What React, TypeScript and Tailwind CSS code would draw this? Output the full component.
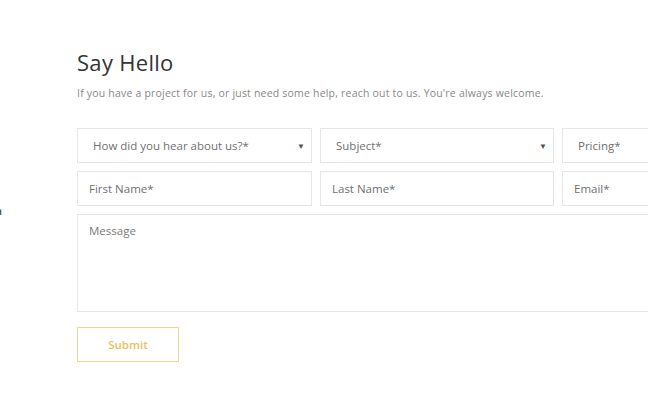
const fieldBase =
  "h-[35px] border border-[#e6e6e6] bg-white text-[11.5px] text-[#6f6f6f] flex items-center";

function SelectField({ label }: { label: string }) {
  return (
    <div className={`${fieldBase} pl-[15px] pr-[6px] justify-between`}>
      <span>{label}</span>
      <span className="text-[8px] text-[#555]">▼</span>
    </div>
  );
}

function InputField({ label }: { label: string }) {
  return <div className={`${fieldBase} px-[11px]`}>{label}</div>;
}

export default function App() {
  return (
    <div
      className="relative w-[648px] h-[410px] overflow-hidden bg-white"
      style={{ fontFamily: '"Open Sans", "Liberation Sans", sans-serif' }}
    >
      {/* cut-off text at the left edge */}
      <span className="absolute left-[-5px] top-[203px] text-[11px] font-semibold text-[#444]">n</span>

      <section className="w-[721px] ml-[77px] pt-[46px]">
        <h1 className="text-[22px] font-medium text-[#333] leading-[32px] tracking-[0.3px]">
          Say Hello
        </h1>
        <p className="mt-[7px] text-[10.5px] text-[#888] leading-[16px] tracking-[0.2px]">
          If you have a project for us, or just need some help, reach out to us. You're always welcome.
        </p>

        <form className="mt-[27px] flex flex-col gap-[8px]">
          <div className="grid grid-cols-[235px_234px_235px] gap-x-[8px] gap-y-[8px]">
            <SelectField label="How did you hear about us?*" />
            <SelectField label="Subject*" />
            <SelectField label="Pricing*" />
            <InputField label="First Name*" />
            <InputField label="Last Name*" />
            <InputField label="Email*" />
          </div>
          <div className="h-[98px] border border-[#e6e6e6] px-[11px] pt-[7px] text-[11.5px] text-[#7a7a7a]">
            Message
          </div>
          <button
            type="button"
            className="mt-[7px] w-[102px] h-[35px] border border-[#e9d98f] text-[11.5px] font-semibold text-[#e6c263]"
          >
            Submit
          </button>
        </form>
      </section>
    </div>
  );
}
